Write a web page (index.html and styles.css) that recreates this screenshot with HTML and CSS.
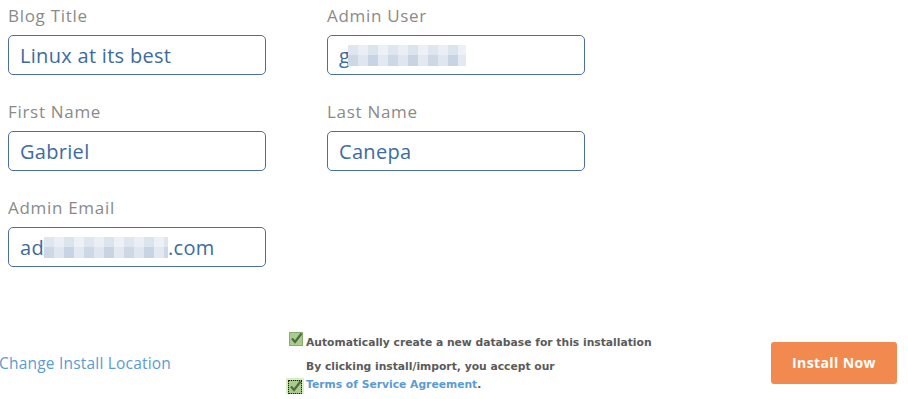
FILE: index.html
```html
<!DOCTYPE html>
<html lang="en">
<head>
    <meta charset="UTF-8">
    <title>Install</title>
    <link rel="stylesheet" href="styles.css">
</head>
<body>
    <form class="install-form">
        <div class="fields">
            <div class="field">
                <label>Blog Title</label>
                <div class="input">Linux at its best</div>
            </div>
            <div class="field">
                <label>Admin User</label>
                <div class="input">g<span class="blur blur-user"></span></div>
            </div>
            <div class="field">
                <label>First Name</label>
                <div class="input">Gabriel</div>
            </div>
            <div class="field">
                <label>Last Name</label>
                <div class="input">Canepa</div>
            </div>
            <div class="field">
                <label>Admin Email</label>
                <div class="input">ad<span class="blur blur-mail"></span>.com</div>
            </div>
        </div>

        <div class="actions">
            <a class="change-location" href="#">Change Install Location</a>

            <div class="options">
                <div class="option option-db">
                    <span class="check">
                        <svg width="14" height="14" viewBox="0 0 14 14"><rect x="0.5" y="0.5" width="13" height="13" fill="#a9cc8e" stroke="#86ad69"/><path d="M3 6.5 L6 10 L12.5 1.5" fill="none" stroke="#4f6b3f" stroke-width="2.2"/></svg>
                    </span>
                    <span class="option-text">Automatically create a new database for this installation</span>
                </div>
                <div class="option option-terms">
                    <span class="check check-focus">
                        <svg width="14" height="14" viewBox="0 0 14 14"><rect x="0.5" y="0.5" width="13" height="13" fill="#a9cc8e" stroke="#86ad69"/><path d="M3 6.5 L6 10 L12.5 1.5" fill="none" stroke="#4f6b3f" stroke-width="2.2"/></svg>
                    </span>
                    <span class="option-text">By clicking install/import, you accept our<br><a href="#">Terms of Service Agreement</a>.</span>
                </div>
            </div>

            <button type="button" class="install-btn">Install Now</button>
        </div>
    </form>
</body>
</html>
```

FILE: styles.css
```css
/* Base */
body {
    margin: 0;
    background: #fff;
    font-family: 'Open Sans', 'DejaVu Sans', sans-serif;
}

/* Form grid */
.fields {
    display: grid;
    grid-template-columns: 258px 258px;
    column-gap: 61px;
    row-gap: 27px;
    padding: 6px 0 0 8px;
}

.field label {
    display: block;
    color: #8a8a8a;
    font-size: 17px;
    line-height: 20px;
    letter-spacing: 0.7px;
    margin-bottom: 9px;
}

.input {
    box-sizing: border-box;
    height: 40px;
    border: 1px solid #4b70a0;
    border-radius: 5px;
    padding: 0 11px;
    display: flex;
    align-items: center;
    color: #3d6b9f;
    font-size: 20px;
    letter-spacing: 0.3px;
}

/* Pixelated (hidden) parts of values */
.blur {
    display: inline-block;
    height: 21px;
    background:
        linear-gradient(to bottom, rgba(255,255,255,0.35) 50%, transparent 50%),
        repeating-linear-gradient(to right, #cdd8e6 0 10px, #dfe6ef 10px 20px, #c8d4e3 20px 30px, #e3e9f1 30px 40px);
}

.blur-user {
    width: 118px;
    margin-left: -2px;
}

.blur-mail {
    width: 124px;
    margin-top: 1px;
}

/* Bottom row */
.actions {
    display: flex;
    align-items: center;
    margin-top: 65px;
}

.change-location {
    width: 290px;
    margin-left: -1px;
    color: #5b9bd3;
    font-size: 15.5px;
    text-decoration: none;
    letter-spacing: 0.2px;
}

.options {
    display: flex;
    flex-direction: column;
    gap: 12px;
    width: 482px;
    font-family: 'DejaVu Sans', Verdana, sans-serif;
    font-size: 10.75px;
    font-weight: bold;
    color: #5a5a5a;
}

.option {
    display: flex;
    align-items: flex-end;
}

.option-db .option-text {
    margin-bottom: -3px;
}

.check {
    display: inline-flex;
    width: 17px;
    margin-right: 0;
}

.check svg {
    display: block;
}

.check-focus svg {
    outline: 1px dotted #222;
    outline-offset: -1px;
    box-shadow: 0 0 0 2px #dcebd0;
    margin-left: -1px;
}

.option-terms .option-text {
    line-height: 18px;
}

.option-text a {
    color: #5b9bd3;
    text-decoration: none;
}

.install-btn {
    width: 126px;
    height: 42px;
    margin-top: -1px;
    border: none;
    border-radius: 3px;
    background: #f28a4f;
    color: #fff;
    font-family: 'Open Sans', sans-serif;
    font-size: 14px;
    font-weight: bold;
    letter-spacing: 0.4px;
}
```
